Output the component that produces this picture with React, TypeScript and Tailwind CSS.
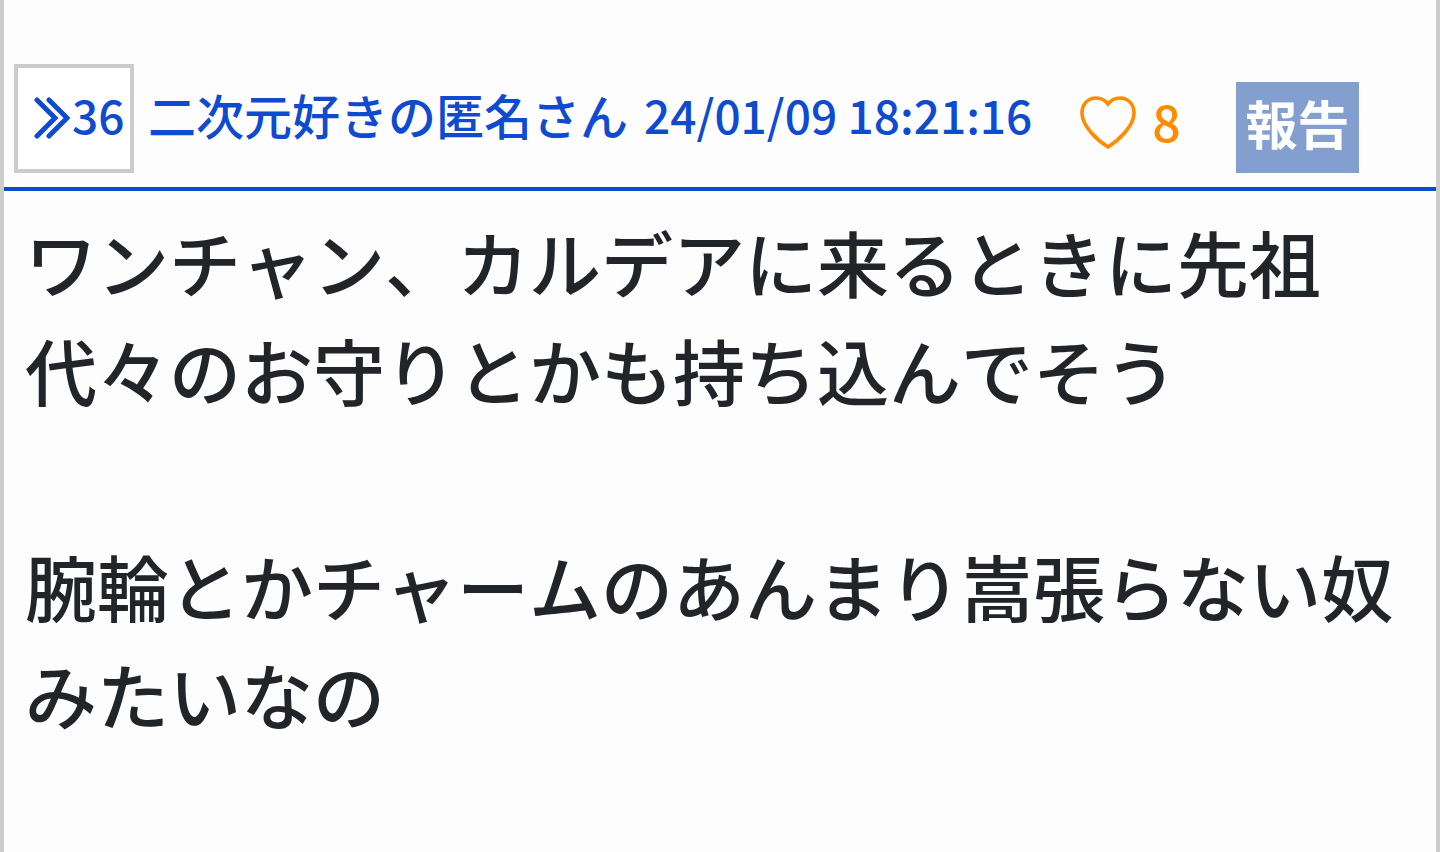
const lines = [
  "ワンチャン、カルデアに来るときに先祖代々のお守りとかも持ち込んでそう",
  "",
  "腕輪とかチャームのあんまり嵩張らない奴みたいなの",
]

const HeartIcon = () => (
  <svg className="mt-1" width="56" height="54" viewBox="0 0 56 54" fill="none" aria-hidden="true">
    <path
      d="M28 51C17 44 2 30 2 17C2 8 8 2 16 2C21 2 25 4 28 8C31 4 35 2 40 2C48 2 54 8 54 17C54 30 39 44 28 51Z"
      stroke="#ff8c00"
      strokeWidth="3.6"
    />
  </svg>
)

const App = () => {
  return (
    <main className="min-h-screen border-x-4 border-[#ccc] bg-[#fdfdfd] pt-16 font-['Noto_Sans_CJK_JP',sans-serif] font-medium [font-kerning:none]">
      <article>
        <header className="flex items-start border-b-4 border-[#0f4bd0] pb-3.5 pl-2.5 text-[#0f4bd0]">
          <button className="flex h-[109px] w-[120px] shrink-0 items-start gap-0.5 border-4 border-[#ccc] bg-white pl-4 pt-2.5 text-[46px] leading-[72px]">
            <svg className="mt-[18px] shrink-0" width="36" height="44" viewBox="0 0 36 44" fill="none" aria-hidden="true">
              <path
                d="M3 4L21 22L3 40M15 4L33 22L15 40"
                stroke="currentColor"
                strokeWidth="5"
                strokeLinecap="round"
              />
            </svg>
            <span>36</span>
          </button>
          <h2 className="ml-3.5 flex gap-4 whitespace-nowrap pt-3.5 text-[48px] leading-[72px]">
            <span>二次元好きの匿名さん</span>
            <time className="text-[46px]">24/01/09 18:21:16</time>
          </h2>
          <button className="ml-12 mt-7 flex items-start gap-4 text-[50px] leading-[56px] text-[#ff8c00]">
            <HeartIcon />
            <span>8</span>
          </button>
          <button className="ml-auto mr-[77px] mt-[18px] h-[91px] w-[123px] bg-[#829fd0] pb-2.5 text-[52px] font-bold text-white">
            報告
          </button>
        </header>

        {/* comment body */}
        <div className="px-[21px] pt-4 text-[72px] leading-[108px] text-[#212529]">
          {lines.map((line, i) => (
            <p key={i} className="min-h-[108px]">
              {line}
            </p>
          ))}
        </div>
      </article>
    </main>
  )
}

export default App
